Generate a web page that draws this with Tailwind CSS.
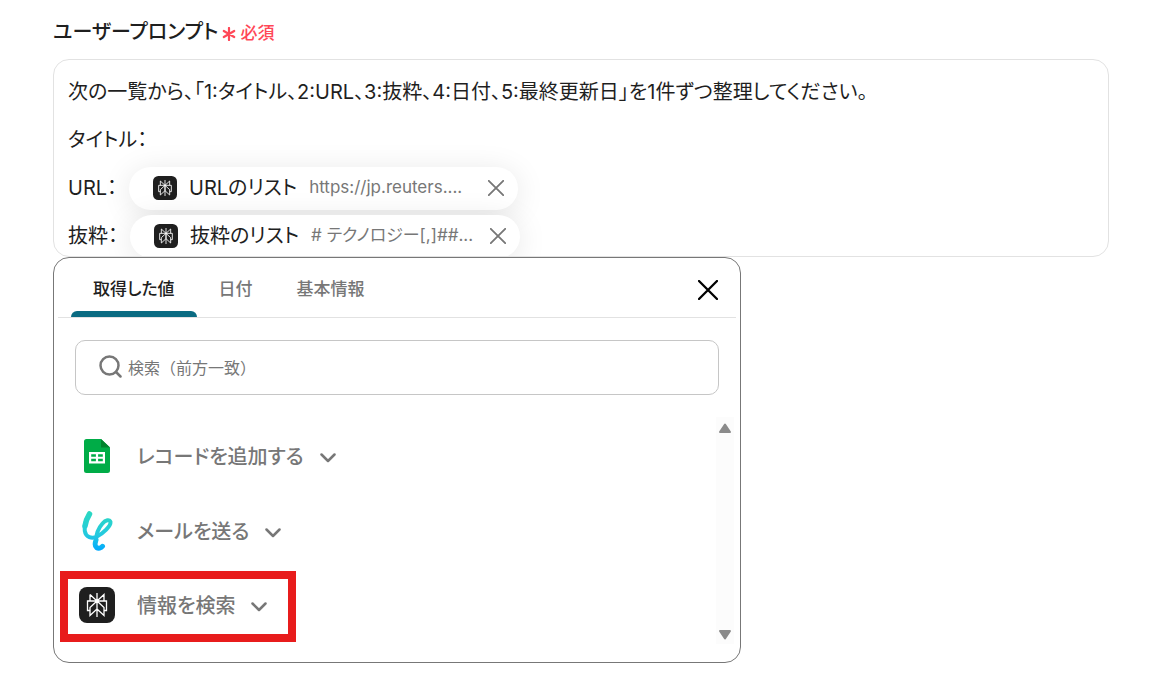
<!DOCTYPE html>
<html lang="ja">
<head>
  <meta charset="UTF-8">
  <meta name="viewport" content="width=device-width, initial-scale=1.0">
  <script src="https://cdn.jsdelivr.net/npm/@tailwindcss/browser@4"></script>
  <title>ユーザープロンプト</title>
</head>
<body class="bg-white text-[#1f1f1f] font-['Inter','Noto_Sans_CJK_JP',sans-serif] [font-feature-settings:'palt']">
  <!-- shared icon shapes -->
  <svg class="hidden">
    <symbol id="icon-perplexity" viewBox="0 0 36 36">
      <rect width="36" height="36" rx="8" fill="#1f1f1f"/>
      <g fill="none" stroke="#fff" stroke-width="1.3">
        <path d="M18 6v24M11 7.500l7 6.500v8l-7 6.500v-8l7-6.500 7 6.500v8l-7-6.500M18 14l7-6.500V14M11 7.500V14M11 23.500H8.500V14h19v9.500H25"/>
      </g>
    </symbol>
    <symbol id="icon-close" viewBox="0 0 20 20">
      <path d="M1 1l18 18M19 1L1 19" fill="none" stroke="currentColor" stroke-width="2.300" stroke-linecap="round"/>
    </symbol>
    <symbol id="icon-chevron" viewBox="0 0 16 10">
      <path d="M1.500 1.500L8 8l6.500-6.500" fill="none" stroke="currentColor" stroke-width="2.500" stroke-linecap="round" stroke-linejoin="round"/>
    </symbol>
  </svg>

  <main class="pl-[53px] pr-[54px] pt-4">
    <div class="flex h-[43px] items-start gap-1 font-['Noto_Sans_CJK_JP',sans-serif] leading-[30px]">
      <span id="prompt-label" class="text-[20px] font-medium">ユーザープロンプト</span>
      <span class="flex items-center gap-1 pt-px text-[17px] font-medium text-[#ff4757]">
        <svg class="mt-1 size-[14px]" viewBox="0 0 14 14" fill="none" stroke="currentColor" stroke-width="2.200" stroke-linecap="round"><path d="M7 1v12M1.800 4l10.400 6M12.200 4L1.800 10"/></svg>
        必須
      </span>
    </div>

    <div role="textbox" aria-multiline="true" aria-labelledby="prompt-label" tabindex="0" class="h-[198px] overflow-hidden rounded-2xl border border-[#e2e2e2] px-[14px] pt-2 text-[20px]">
      <p class="h-12 leading-[48px]">次の一覧から、「1:タイトル、2:URL、3:抜粋、4:日付、5:最終更新日」を1件ずつ整理してください。</p>
      <p class="h-12 leading-[48px]">タイトル：</p>
      <p class="flex h-12 items-center gap-3">
        URL：
        <span class="flex h-[43px] items-center rounded-full bg-white pl-6 pr-[14px] shadow-[0_4px_30px_rgba(0,0,0,0.1)]">
          <svg class="mr-3 size-6"><use href="#icon-perplexity"/></svg>
          URLのリスト
          <span class="ml-3 w-[167px] overflow-hidden whitespace-nowrap text-[17px] text-[#777]">https://jp.reuters....</span>
          <button type="button" aria-label="削除" class="ml-3 text-[#777]"><svg class="size-4"><use href="#icon-close"/></svg></button>
        </span>
      </p>
      <p class="flex h-12 items-center gap-3">
        抜粋：
        <span class="flex h-[43px] items-center rounded-full bg-white pl-6 pr-[14px] shadow-[0_4px_30px_rgba(0,0,0,0.1)]">
          <svg class="mr-3 size-6"><use href="#icon-perplexity"/></svg>
          抜粋のリスト
          <span class="ml-3 w-[167px] overflow-hidden whitespace-nowrap text-[17px] text-[#777]"># テクノロジー[,]##...</span>
          <button type="button" aria-label="削除" class="ml-3 text-[#777]"><svg class="size-4"><use href="#icon-close"/></svg></button>
        </span>
      </p>
    </div>

    <section class="w-full max-w-[688px] rounded-2xl border border-[#777] bg-white pb-[18px] font-['Noto_Sans_CJK_JP',sans-serif]">
      <div class="mx-1 flex h-[60px] items-center justify-between border-b border-[#e2e2e2] pl-[13px] pr-[18px]">
        <div role="tablist" class="flex h-full text-[17px] font-medium text-[#777]">
          <button type="button" role="tab" aria-selected="true" class="relative px-[22px] text-[#1f1f1f]">
            取得した値
            <span class="absolute inset-x-0 bottom-0 h-[6px] rounded-t-md bg-[#0a6b82]"></span>
          </button>
          <button type="button" role="tab" aria-selected="false" class="px-[22px]">日付</button>
          <button type="button" role="tab" aria-selected="false" class="px-[22px]">基本情報</button>
        </div>
        <button type="button" aria-label="閉じる" class="mt-1 text-black"><svg class="size-5"><use href="#icon-close"/></svg></button>
      </div>

      <label class="mx-[21px] mt-[22px] flex h-[55px] items-center gap-[6px] rounded-[10px] border border-[#c6c6c6] px-[22px] pb-[2px]">
        <svg class="size-6 shrink-0 text-[#777]" viewBox="0 0 24 24" fill="none" stroke="currentColor" stroke-width="2.500" stroke-linecap="round"><circle cx="11.500" cy="10.500" r="9"/><path d="M18 17l4.500 4.500"/></svg>
        <input type="text" aria-label="検索" placeholder="検索（前方一致）" class="min-w-0 grow text-base outline-none [font-feature-settings:normal] placeholder:text-[#777]">
      </label>

      <div class="mr-[6px] mt-[22px] flex h-[227px]">
        <ul class="grow text-[20px] font-medium text-[#777]">
          <li class="flex h-[75px] items-center pl-[25px] pt-[2px]">
            <button type="button" class="flex items-center">
              <span class="mr-[22px] flex w-9 justify-center">
                <svg class="h-[34px] w-[26px]" viewBox="0 0 26 34">
                  <path d="M2.500 0H17l9 8.500v23a2.500 2.500 0 0 1-2.500 2.500h-21A2.500 2.500 0 0 1 0 31.500v-29A2.500 2.500 0 0 1 2.500 0z" fill="#00ac47"/>
                  <path d="M17 0l9 8.500h-9z" fill="#00832d"/>
                  <path d="M5 13h16v11.500H5zM7.200 15.200v2.500h4.700v-2.500zM14.100 15.200v2.500h4.700v-2.500zM7.200 19.800v2.500h4.700v-2.500zM14.100 19.800v2.500h4.700v-2.500z" fill="#fff" fill-rule="evenodd"/>
                </svg>
              </span>
              レコードを追加する
              <svg class="ml-4 mt-1 h-[10px] w-4"><use href="#icon-chevron"/></svg>
            </button>
          </li>
          <li class="flex h-[75px] items-center pl-[25px] pt-[2px]">
            <button type="button" class="flex items-center">
              <span class="mr-[22px] flex w-9 justify-center">
                <svg class="h-10 w-8" viewBox="0 0 32 40" fill="none" stroke-linecap="round" stroke-linejoin="round">
                  <defs>
                    <linearGradient id="mail-gradient" x1="0" y1="0" x2="0" y2="40" gradientUnits="userSpaceOnUse">
                      <stop offset="0" stop-color="#2cd9c0"/>
                      <stop offset=".6" stop-color="#24c9df"/>
                      <stop offset="1" stop-color="#00a8ff"/>
                    </linearGradient>
                  </defs>
                  <g stroke="url(#mail-gradient)">
                    <path d="M8.500 3C5 8.500 3 15 3.800 20c1 6.500 7.200 8 12.200 5.500C22 22.500 30 15 29.500 11c-.6-3-5-2-8 1.500C17 17.500 15 25 15 30" stroke-width="4"/>
                    <path d="M8.500 3C6 7 4.500 11.500 4 15" stroke-width="5.500"/>
                    <path d="M15 29c-1 3-1.500 6 .5 7.500 2 1.200 4.500.7 6-1.200" stroke-width="5"/>
                  </g>
                </svg>
              </span>
              メールを送る
              <svg class="ml-4 mt-1 h-[10px] w-4"><use href="#icon-chevron"/></svg>
            </button>
          </li>
          <li class="relative flex h-[75px] items-center pl-[25px]">
            <button type="button" class="flex items-center">
              <svg class="mr-[22px] size-9"><use href="#icon-perplexity"/></svg>
              情報を検索
              <svg class="ml-4 mt-1 h-[10px] w-4"><use href="#icon-chevron"/></svg>
            </button>
            <span class="pointer-events-none absolute left-[6px] top-1 h-[71px] w-[236px] border-8 border-[#e81c1c]"></span>
          </li>
        </ul>
        <!-- scrollbar -->
        <div class="flex w-[18px] flex-col items-center justify-between bg-[#fcfcfc] pb-1 pt-[6px] text-[#8b8b8b]">
          <svg class="h-[10px] w-[14px]" viewBox="0 0 14 10" fill="currentColor" stroke="currentColor" stroke-width="2" stroke-linejoin="round"><path d="M7 1.500L12 9H2z"/></svg>
          <svg class="h-[10px] w-[14px]" viewBox="0 0 14 10" fill="currentColor" stroke="currentColor" stroke-width="2" stroke-linejoin="round"><path d="M7 8.500L12 1H2z"/></svg>
        </div>
      </div>
    </section>
  </main>
</body>
</html>
